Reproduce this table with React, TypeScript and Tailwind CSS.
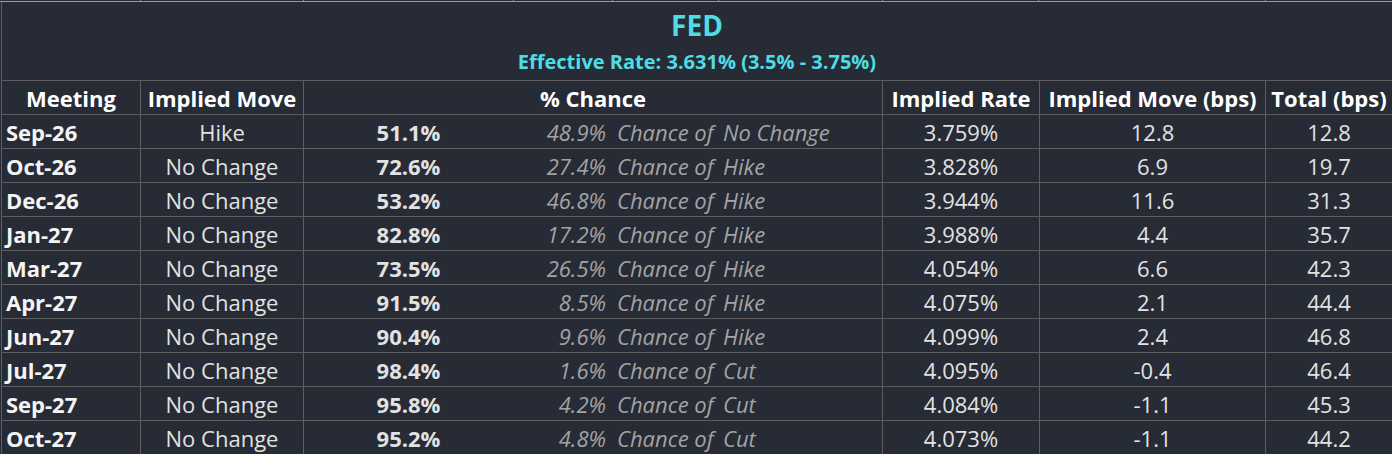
const rows = [
  ["Sep-26", "Hike", "51.1%", "48.9%", "No Change", "3.759%", "12.8", "12.8"],
  ["Oct-26", "No Change", "72.6%", "27.4%", "Hike", "3.828%", "6.9", "19.7"],
  ["Dec-26", "No Change", "53.2%", "46.8%", "Hike", "3.944%", "11.6", "31.3"],
  ["Jan-27", "No Change", "82.8%", "17.2%", "Hike", "3.988%", "4.4", "35.7"],
  ["Mar-27", "No Change", "73.5%", "26.5%", "Hike", "4.054%", "6.6", "42.3"],
  ["Apr-27", "No Change", "91.5%", "8.5%", "Hike", "4.075%", "2.1", "44.4"],
  ["Jun-27", "No Change", "90.4%", "9.6%", "Hike", "4.099%", "2.4", "46.8"],
  ["Jul-27", "No Change", "98.4%", "1.6%", "Cut", "4.095%", "-0.4", "46.4"],
  ["Sep-27", "No Change", "95.8%", "4.2%", "Cut", "4.084%", "-1.1", "45.3"],
  ["Oct-27", "No Change", "95.2%", "4.8%", "Cut", "4.073%", "-1.1", "44.2"],
];

const cols = "grid grid-cols-[139px_163px_579px_157px_226px_1fr]";
const cell = "h-[34px] border-r border-b border-[#5e5e5e] pt-[2px] leading-[31px] whitespace-nowrap overflow-hidden";

export default function App() {
  return (
    <div
      className="w-[1392px] h-[454px] overflow-hidden bg-[#262b36] text-[22px] text-[#e2e2e2]"
      style={{ fontFamily: '"Open Sans", "Liberation Sans", sans-serif' }}
    >
      {/* gridline stubs of the row above */}
      <div className="grid grid-cols-[141px_163px_210px_99px_106px_164px_156px_227px_1fr] h-px">
        {Array.from({ length: 9 }).map((_, i) => (
          <div key={i} className={i < 8 ? "border-r border-[#8a8a8a]" : ""} />
        ))}
      </div>
      <div className="h-px bg-[#9c9c9c]" />

      <div className="ml-px border-l border-[#5e5e5e]">
        <div className="h-[79px] border-b border-[#5e5e5e] flex flex-col items-center font-bold text-[#4edde4]">
          <div className="mt-[4px] text-[28px] leading-[38px]">FED</div>
          <div className="mt-[4px] text-[20px] leading-[27px]">Effective Rate: 3.631% (3.5% - 3.75%)</div>
        </div>

        <div className={cols + " font-bold text-white"}>
          <div className={cell + " text-center"}>Meeting</div>
          <div className={cell + " text-center"}>Implied Move</div>
          <div className={cell + " text-center"}>% Chance</div>
          <div className={cell + " text-center"}>Implied Rate</div>
          <div className={cell + " text-center"}>Implied Move (bps)</div>
          <div className={cell + " text-center border-r-0"}>Total (bps)</div>
        </div>

        {rows.map(([meeting, move, pct, other, outcome, rate, bps, total]) => (
          <div key={meeting} className={cols}>
            <div className={cell + " pl-[4px] font-bold text-[#f4f4f4]"}>{meeting}</div>
            <div className={cell + " text-center"}>{move}</div>
            <div className={cell + " grid grid-cols-[209px_99px_106px_1fr]"}>
              <span className="text-center font-bold">{pct}</span>
              <span className="text-right pr-[6px] italic text-[#a3a3a3]">{other}</span>
              <span className="pl-[5px] italic text-[#a3a3a3]">Chance of</span>
              <span className="pl-[5px] italic text-[#a3a3a3]">{outcome}</span>
            </div>
            <div className={cell + " text-center"}>{rate}</div>
            <div className={cell + " text-center"}>{bps}</div>
            <div className={cell + " text-center border-r-0"}>{total}</div>
          </div>
        ))}
      </div>
    </div>
  );
}
